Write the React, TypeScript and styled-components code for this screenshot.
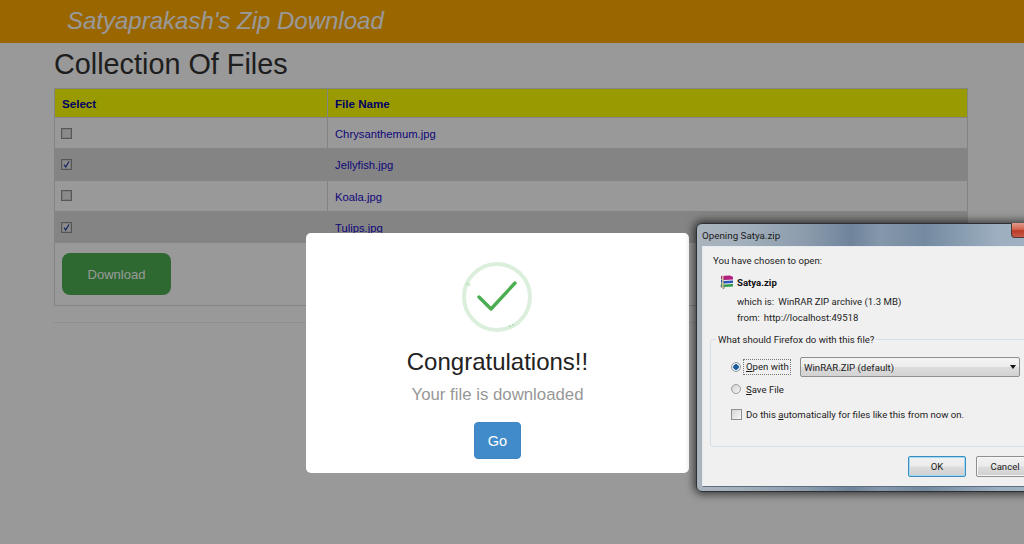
import React from 'react';
import styled, { createGlobalStyle } from 'styled-components';

const files = [
  { name: 'Chrysanthemum.jpg', checked: false },
  { name: 'Jellyfish.jpg', checked: true },
  { name: 'Koala.jpg', checked: false },
  { name: 'Tulips.jpg', checked: true },
];

const Tick = () => (
  <svg width="9" height="9" viewBox="0 0 9 9">
    <path d="M2 4.5 L3.7 7 L7 1.5" fill="none" stroke="#2b3f9e" strokeWidth="1.3" />
  </svg>
);

const ZipIcon = () => (
  <svg width="14" height="14" viewBox="0 0 14 14">
    <path d="M1 1 L10 0.5 L13 2 L13 4.5 L4 5 L1 3.5Z" fill="#b0207c" />
    <path d="M1 4.5 L4 6 L13 5.5 L13 8 L4 8.5 L1 7Z" fill="#2d55b8" />
    <path d="M1 8 L4 9.5 L13 9 L13 11.5 L4 12 L1 10.5Z" fill="#2f9a4a" />
    <path d="M1 3.5 L4 5 M1 7 L4 8.5 M1 10.5 L4 12 L4 13.5 L1 12Z" fill="#ddd" stroke="#333" strokeWidth="0.6" />
    <rect x="2" y="1" width="1.6" height="12" fill="#d8c9a0" opacity="0.85" />
  </svg>
);

const SuccessIcon = () => (
  <svg width="70" height="70" viewBox="0 0 70 70">
    <circle cx="35" cy="35" r="33" fill="none" stroke="#dbefdc" strokeWidth="4" />
    <path d="M4.5 23 L6 20.5 M6.5 24 L8 21.5 M46.5 63.5 L49 65 M50 62 L52 64" stroke="#8fd094" strokeWidth="0.8" />
    <path d="M17 35 L29 47 L53 21" fill="none" stroke="#4cae50" strokeWidth="3.4" strokeLinecap="round" strokeLinejoin="round" />
  </svg>
);

const App = () => {
  return (
    <Page>
      <GlobalStyle />
      <Header>
        <Brand>Satyaprakash's Zip Download</Brand>
      </Header>
      <Content>
        <Heading>Collection Of Files</Heading>
        <FileTable>
          <thead>
            <tr>
              <HeadCell $first>Select</HeadCell>
              <HeadCell>File Name</HeadCell>
            </tr>
          </thead>
          <tbody>
            {files.map((file, index) => (
              <FileRow key={file.name} $alt={index % 2 === 1}>
                <Cell>
                  <CheckBox>{file.checked && <Tick />}</CheckBox>
                </Cell>
                <Cell>
                  <FileLink href="#">{file.name}</FileLink>
                </Cell>
              </FileRow>
            ))}
            <tr>
              <ButtonCell colSpan={2}>
                <DownloadButton>Download</DownloadButton>
              </ButtonCell>
            </tr>
          </tbody>
        </FileTable>
        <Rule />
      </Content>

      <Overlay />

      <Modal>
        <SuccessRing>
          <SuccessIcon />
        </SuccessRing>
        <ModalTitle>Congratulations!!</ModalTitle>
        <ModalText>Your file is downloaded</ModalText>
        <GoButton>Go</GoButton>
      </Modal>

      <Win>
        <TitleBar>
          <TitleText>Opening Satya.zip</TitleText>
          <CloseButton />
        </TitleBar>
        <Client>
          <WinLine>You have chosen to open:</WinLine>
          <FileTitle>
            <ZipIcon />
            <strong>Satya.zip</strong>
          </FileTitle>
          <MetaRow>
            <span>which is:</span>
            <span>WinRAR ZIP archive (1.3 MB)</span>
          </MetaRow>
          <MetaRow>
            <span>from:</span>
            <span>http://localhost:49518</span>
          </MetaRow>
          <ChoiceBox>
            <legend>What should Firefox do with this file?</legend>
            <ChoiceRow>
              <Radio $on />
              <FocusLabel><u>O</u>pen with</FocusLabel>
              <AppSelect>
                WinRAR.ZIP (default)
                <Caret />
              </AppSelect>
            </ChoiceRow>
            <SaveRow>
              <Radio />
              <span><u>S</u>ave File</span>
            </SaveRow>
            <AutoRow>
              <WinCheck />
              <span>Do this <u>a</u>utomatically for files like this from now on.</span>
            </AutoRow>
          </ChoiceBox>
          <WinFooter>
            <WinButton $primary>OK</WinButton>
            <WinButton>Cancel</WinButton>
          </WinFooter>
        </Client>
      </Win>
    </Page>
  );
};

export default App;

const GlobalStyle = createGlobalStyle`
  html, body {
    margin: 0;
    padding: 0;
    overflow: hidden;
    background: #fff;
  }
`;

const Page = styled.div`
  position: relative;
  width: 1024px;
  height: 544px;
  overflow: hidden;
  font-family: 'Liberation Sans', Arial, sans-serif;
  color: #333;
`;

const Header = styled.header`
  height: 43px;
  padding-left: 67px;
  background: #ffaa00;
  display: flex;
  align-items: center;
`;

const Brand = styled.div`
  font-size: 24px;
  font-style: italic;
  color: #fff;
  margin-top: -1px;
`;

const Content = styled.main`
  padding: 0 56px 0 54px;
`;

const Heading = styled.h2`
  margin: 0;
  height: 45px;
  line-height: 42px;
  font-size: 28.8px;
  font-weight: 400;
`;

const FileTable = styled.table`
  width: 914px;
  table-layout: fixed;
  border-collapse: collapse;
  border: 1px solid #ddd;
`;

const HeadCell = styled.th<{ $first?: boolean }>`
  width: ${(p) => (p.$first ? '258px' : 'auto')};
  height: 28px;
  padding: 0 7px;
  text-align: left;
  font-size: 11.6px;
  color: #0000aa;
  background: #ffff00;
  border: 1px solid #ddd;
`;

const FileRow = styled.tr<{ $alt: boolean }>`
  height: 31.3px;
  background: ${(p) => (p.$alt ? '#dcdcdc' : 'transparent')};
`;

const Cell = styled.td`
  padding: 0 7px;
  border: 1px solid #ddd;
  vertical-align: middle;
`;

const CheckBox = styled.span`
  display: flex;
  align-items: center;
  justify-content: center;
  width: 9px;
  height: 9px;
  border: 1px solid #8e8f8f;
  background: #e8e8e8;
  box-shadow: inset 0 0 0 1px #d0d0d0;
  margin: 0 0 0 -1px;
`;

const FileLink = styled.a`
  font-size: 11.25px;
  color: #1a0dcc;
  text-decoration: none;
`;

const ButtonCell = styled.td`
  padding: 10px 7px;
  border: 1px solid #ddd;
`;

const DownloadButton = styled.button`
  display: block;
  width: 109px;
  height: 42px;
  border: 0;
  border-radius: 8px;
  background: #4caf50;
  color: #fff;
  font-family: inherit;
  font-size: 13px;
`;

const Rule = styled.hr`
  margin: 16px 0 0;
  border: 0;
  border-top: 1px solid #eee;
`;

const Overlay = styled.div`
  position: absolute;
  inset: 0;
  background: rgba(0, 0, 0, 0.4);
`;

const Modal = styled.div`
  position: absolute;
  left: 306px;
  top: 233px;
  width: 383px;
  height: 240px;
  padding-top: 29px;
  box-sizing: border-box;
  display: flex;
  flex-direction: column;
  align-items: center;
  background: #fff;
  border-radius: 5px;
`;

const SuccessRing = styled.div`
  width: 70px;
  height: 70px;
  margin-left: -2px;
`;

const ModalTitle = styled.h2`
  margin: 14px 0 0;
  font-size: 24px;
  line-height: 32px;
  font-weight: 400;
  color: #222;
`;

const ModalText = styled.p`
  margin: 5px 0 0;
  font-size: 16.8px;
  line-height: 24px;
  color: #979797;
`;

const GoButton = styled.button`
  margin-top: 15px;
  width: 47px;
  height: 37px;
  border: 1px solid #3f85c2;
  border-radius: 4px;
  background: #428bca;
  color: #fff;
  font-family: inherit;
  font-size: 14.5px;
`;

const Win = styled.div`
  position: absolute;
  left: 696px;
  top: 223px;
  width: 369px;
  height: 269px;
  box-sizing: border-box;
  padding: 0 5px 4px;
  display: flex;
  flex-direction: column;
  border: 1px solid #2c3137;
  border-radius: 6px;
  background: linear-gradient(90deg, #aab4bd 0%, #a3b0bc 12%, #8b9bac 30%, #6f849b 42%, #8597aa 50%, #748aa0 62%, #9dafc0 82%, #a4b3c3 100%);
  box-shadow: 0 0 8px 2px rgba(0, 0, 0, 0.65);
  font-family: Roboto, 'Open Sans', sans-serif;
  font-size: 9.6px;
  color: #1c1c1c;
`;

const TitleBar = styled.div`
  height: 22px;
  display: flex;
  align-items: center;
  justify-content: space-between;
  flex-shrink: 0;
`;

const TitleText = styled.div`
  font-size: 9.8px;
  color: #1a1a1a;
`;

const CloseButton = styled.div`
  align-self: flex-start;
  width: 44px;
  height: 14px;
  margin-top: -1px;
  margin-right: 2px;
  border: 1px solid #4d3a36;
  border-top: 0;
  border-radius: 0 0 4px 4px;
  background: linear-gradient(#e09a8a 0%, #d4654f 45%, #b83a26 55%, #c75a48 100%);
`;

const Client = styled.div`
  flex: 1;
  display: flex;
  flex-direction: column;
  padding: 7px 10px 0;
  background: #f0f0f0;
  border: 1px solid #e4ebf1;
  border-bottom-color: #5d6f83;
  box-sizing: border-box;
`;

const WinLine = styled.div`
  line-height: 14px;
`;

const FileTitle = styled.div`
  display: flex;
  align-items: center;
  gap: 3px;
  margin: 6px 0 3px 7px;
  height: 16px;
  color: #111;
`;

const MetaRow = styled.div`
  display: flex;
  gap: 4px;
  margin-left: 24px;
  margin-top: 1px;
  line-height: 15px;
`;

const ChoiceBox = styled.fieldset`
  margin: 8px 0 0 -3px;
  padding: 11px 0 0 20px;
  width: 340px;
  height: 114px;
  box-sizing: border-box;
  border: 1px solid #d5dfe5;
  border-radius: 3px;
  legend {
    margin-left: -15px;
    padding: 0 2px;
    line-height: 13px;
  }
`;

const ChoiceRow = styled.div`
  display: flex;
  align-items: center;
  height: 20px;
`;

const SaveRow = styled(ChoiceRow)`
  margin-top: 2px;
  gap: 5px;
`;

const AutoRow = styled(ChoiceRow)`
  margin-top: 5px;
  gap: 4px;
`;

const Radio = styled.span<{ $on?: boolean }>`
  width: 10px;
  height: 10px;
  flex-shrink: 0;
  box-sizing: border-box;
  border: 1px solid #9a9ea3;
  border-radius: 50%;
  background: ${(p) =>
    p.$on
      ? 'radial-gradient(circle, #1d5f9e 0 2.5px, #e4ecf3 3px)'
      : 'linear-gradient(135deg, #d2d2d2, #f6f6f6)'};
`;

const FocusLabel = styled.span`
  width: 48px;
  flex-shrink: 0;
  box-sizing: border-box;
  margin-left: 2px;
  padding-left: 2px;
  border: 1px dotted #777;
  line-height: 14px;
  white-space: nowrap;
`;

const AppSelect = styled.div`
  position: relative;
  width: 220px;
  height: 20px;
  margin-left: 9px;
  padding-left: 3px;
  box-sizing: border-box;
  display: flex;
  align-items: center;
  border: 1px solid #8e8f8f;
  border-radius: 2px;
  background: linear-gradient(#f4f4f4 0%, #ececec 48%, #dcdcdc 52%, #d2d2d2 100%);
`;

const Caret = styled.span`
  position: absolute;
  right: 3px;
  top: 7px;
  border-left: 3px solid transparent;
  border-right: 3px solid transparent;
  border-top: 4px solid #111;
`;

const WinCheck = styled.span`
  width: 9px;
  height: 9px;
  flex-shrink: 0;
  border: 1px solid #8e8f8f;
  background: linear-gradient(135deg, #d4d4d4, #f8f8f8);
`;

const WinFooter = styled.div`
  display: flex;
  gap: 10px;
  margin-top: 9px;
  margin-left: 195px;
`;

const WinButton = styled.div<{ $primary?: boolean }>`
  width: 56px;
  height: 19px;
  flex-shrink: 0;
  display: flex;
  align-items: center;
  justify-content: center;
  border: 1px solid ${(p) => (p.$primary ? '#3c8dbd' : '#8e8f8f')};
  border-radius: 2px;
  background: linear-gradient(#f2f2f2 0%, #ebebeb 48%, #dddddd 52%, #cfcfcf 100%);
  box-shadow: ${(p) => (p.$primary ? 'inset 0 0 0 1px #9fdcf3' : 'inset 0 0 0 1px #f7f7f7')};
`;
